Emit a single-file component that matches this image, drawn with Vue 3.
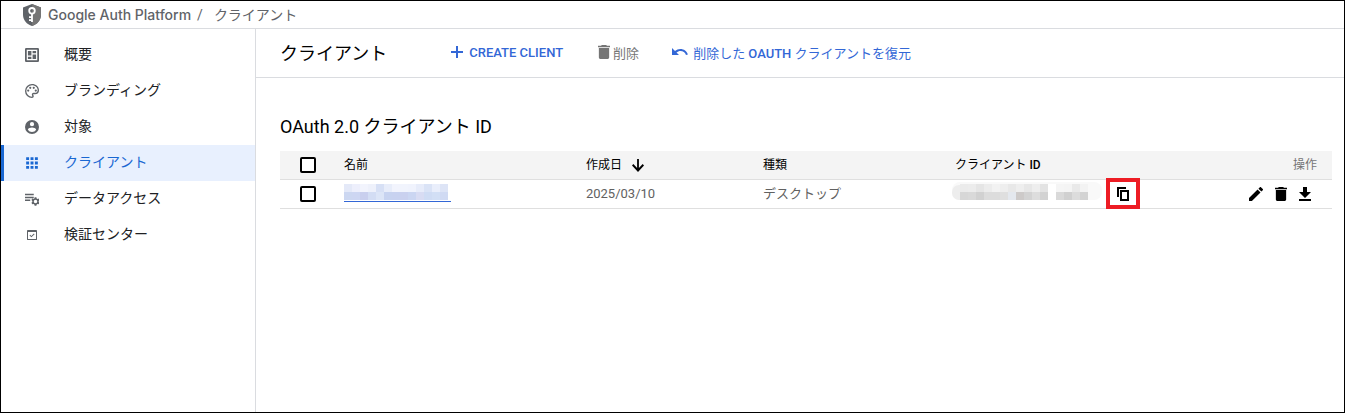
<template>
  <div class="console">
    <header class="topbar">
      <svg class="shield" viewBox="0 0 18 22" aria-hidden="true">
        <path fill="#5f6368" d="M9 0 18 3.4V11c0 5-3.8 9.4-9 11-5.2-1.6-9-6-9-11V3.4z" />
        <path fill="#757575" d="M9 0 18 3.4V11c0 5-3.8 9.4-9 11z" />
        <circle cx="9" cy="6.8" r="2.8" fill="none" stroke="#fff" stroke-width="1.8" />
        <path fill="#fff" d="M8.1 9.5h1.8V18H8.1zM6 12.2h2.5v1.7H6zM6 15.2h2.5v1.7H6z" />
      </svg>
      <a class="product" href="#">Google Auth Platform</a>
      <span class="slash">/</span>
      <span class="crumb">クライアント</span>
    </header>

    <div class="body">
      <nav class="sidebar">
        <a
          v-for="item in menu"
          :key="item.label"
          href="#"
          class="menu-item"
          :class="{ active: item.active }"
        >
          <svg class="menu-icon" :class="{ small: item.small }" viewBox="0 0 24 24" aria-hidden="true">
            <path :d="item.icon" fill-rule="evenodd" />
          </svg>
          <span>{{ item.label }}</span>
        </a>
      </nav>

      <main class="main">
        <div class="toolbar">
          <h1>クライアント</h1>
          <button type="button" class="action create">
            <svg viewBox="0 0 12 12" width="12" height="12" aria-hidden="true"><path d="M5 0h2v5h5v2H7v5H5V7H0V5h5z" /></svg>
            <b>CREATE CLIENT</b>
          </button>
          <button type="button" class="action remove" disabled>
            <svg viewBox="5 3 14 18" width="12" height="14" preserveAspectRatio="none" aria-hidden="true"><path :d="icons.trash" /></svg>
            削除
          </button>
          <button type="button" class="action restore">
            <svg viewBox="0 0 16 10" width="16" height="10" aria-hidden="true">
              <path d="M0 1v7h7L4.5 5.5C5.6 4.6 7 4 8.4 4c2.600 0 4.800 1.600 5.600 4l1.900-.6C14.800 4.200 11.900 2 8.400 2 6.400 2 4.500 2.800 3 4z" />
            </svg>
            <span>削除した <b>OAUTH</b> クライアントを復元</span>
          </button>
        </div>

        <section class="content">
          <h2>OAuth 2.0 クライアント ID</h2>
          <table>
            <colgroup>
              <col class="col-check">
              <col class="col-name">
              <col class="col-date">
              <col class="col-type">
              <col class="col-id">
              <col>
            </colgroup>
            <thead>
              <tr>
                <th class="check"><input type="checkbox" aria-label="すべて選択"></th>
                <th>名前</th>
                <th>
                  <span class="sort">作成日
                    <svg viewBox="4 4 16 16" width="12" height="13" preserveAspectRatio="none" aria-hidden="true"><path d="m20 12-1.800-1.800-5 5V4h-2.400v11.200l-5-5L4 12l8 8z" /></svg>
                  </span>
                </th>
                <th>種類</th>
                <th>クライアント <b>ID</b></th>
                <th class="ops-head">操作</th>
              </tr>
            </thead>
            <tbody>
              <tr>
                <td class="check"><input type="checkbox" aria-label="クライアントを選択"></td>
                <td>
                  <a class="masked-link" href="#" aria-label="クライアント名">
                    <svg width="107" height="17" viewBox="0 0 107 17" aria-hidden="true">
                      <rect v-for="(c, i) in nameMask" :key="i" :x="(i % 13) * 8" :y="i < 13 ? 0 : 8" width="8" height="8" :fill="c" />
                    </svg>
                  </a>
                </td>
                <td>2025/03/10</td>
                <td>デスクトップ</td>
                <td>
                  <div class="id-cell">
                    <svg class="id-mask" width="150" height="18" viewBox="0 0 150 18" aria-hidden="true">
                      <rect width="150" height="18" rx="8" fill="#f9f9f9" />
                      <rect y="3" width="16" height="15" rx="7" fill="#ededed" />
                      <rect v-for="(c, i) in idMask" :key="i" :x="8 + (i % 16) * 8" :y="i < 16 ? 2 : 10" width="8" height="8" :fill="c" />
                    </svg>
                    <button type="button" class="copy" aria-label="コピー">
                      <svg viewBox="0 0 12 14" width="12" height="14" aria-hidden="true">
                        <path d="M0 0h9v2H2v8H0zM3 3h9v11H3zM5 5v7h5V5z" fill-rule="evenodd" />
                      </svg>
                    </button>
                  </div>
                </td>
                <td>
                  <div class="ops">
                    <button type="button" aria-label="編集">
                      <svg viewBox="3 3 18 18" width="14" height="14" aria-hidden="true"><path d="M3 17.250V21h3.750L17.810 9.940l-3.750-3.750zM20.710 7.040a1 1 0 0 0 0-1.410l-2.340-2.340a1 1 0 0 0-1.410 0l-1.830 1.830 3.750 3.750z" /></svg>
                    </button>
                    <button type="button" aria-label="削除">
                      <svg viewBox="5 3 14 18" width="12" height="14" preserveAspectRatio="none" aria-hidden="true"><path :d="icons.trash" /></svg>
                    </button>
                    <button type="button" aria-label="ダウンロード">
                      <svg viewBox="0 0 12 14" width="12" height="14" aria-hidden="true"><path d="M4 0h4v5h4l-6 6-6-6h4zM0 12h12v2H0z" /></svg>
                    </button>
                  </div>
                </td>
              </tr>
            </tbody>
          </table>
        </section>
      </main>
    </div>
  </div>
</template>

<script setup>
const icons = {
  trash: 'M6 19c0 1.100.9 2 2 2h8c1.100 0 2-.9 2-2V7H6zM19 4h-3.500l-1-1h-5l-1 1H5v2h14z'
}

const menu = [
  {
    label: '概要',
    icon: 'M2 0h20a2 2 0 0 1 2 2v20a2 2 0 0 1-2 2H2a2 2 0 0 1-2-2V2a2 2 0 0 1 2-2zM3 3v18h18V3zM5 5h6v8H5zM13 5h6v4h-6zM13 11h6v8h-6zM5 15h6v4H5z'
  },
  {
    label: 'ブランディング',
    icon: 'M12 0a12 12 0 0 0 0 24c1.700 0 3-1.300 3-3 0-.8-.3-1.500-.8-2-.5-.6-.1-1.500.7-1.500H17a7 7 0 0 0 7-7C24 4.700 18.600 0 12 0zM12 2.300c5.300 0 9.700 3.700 9.700 8.200 0 2.600-2.100 4.700-4.700 4.700h-2.100c-2.600 0-4.100 3-2.600 5.100.4.600.2 1.400-.3 1.400a9.700 9.700 0 0 1 0-19.400zM5.500 9.300a1.900 1.900 0 1 0 0 3.800 1.900 1.900 0 0 0 0-3.800zM9 4.700a1.900 1.900 0 1 0 0 3.800 1.900 1.900 0 0 0 0-3.800zM15 4.700a1.900 1.900 0 1 0 0 3.800 1.900 1.900 0 0 0 0-3.800zM18.500 9.300a1.900 1.900 0 1 0 0 3.800 1.900 1.900 0 0 0 0-3.800z'
  },
  {
    label: '対象',
    icon: 'M12 0a12 12 0 1 0 0 24 12 12 0 0 0 0-24zM12 3.600a3.600 3.600 0 1 1 0 7.200 3.600 3.600 0 0 1 0-7.200zM12 20.600a8.600 8.600 0 0 1-7.200-3.900c0-2.400 4.800-3.700 7.200-3.700s7.200 1.300 7.200 3.700a8.600 8.600 0 0 1-7.200 3.900z'
  },
  {
    label: 'クライアント',
    active: true,
    icon: 'M2 2h5v5H2zM9.500 2h5v5h-5zM17 2h5v5h-5zM2 9.500h5v5H2zM9.500 9.500h5v5h-5zM17 9.500h5v5h-5zM2 17h5v5H2zM9.500 17h5v5h-5zM17 17h5v5h-5z'
  },
  {
    label: 'データアクセス',
    icon: 'M0 3h15v2.500H0zM0 8h15v2.500H0zM0 13h9v2.500H0zM16.500 9h3l.5 2 1.500.9 2-.6 1.500 2.600-1.500 1.500v1.700l1.500 1.500-1.500 2.600-2-.6-1.500.9-.5 2h-3l-.5-2-1.500-.9-2 .6-1.500-2.600 1.500-1.500v-1.700L11 13.900l1.500-2.600 2 .6L16 11zM18 13.300a3 3 0 1 0 0 6 3 3 0 0 0 0-6z'
  },
  {
    label: '検証センター',
    small: true,
    icon: 'M2 0h20a2 2 0 0 1 2 2v20a2 2 0 0 1-2 2H2a2 2 0 0 1-2-2V2a2 2 0 0 1 2-2zM2.400 5v16.600h19.200V5zM6 13l1.700-1.700 2.800 2.800 6-6L18.200 10l-7.700 7.500z'
  }
]

// colour blocks that hide the client name and ID
const nameMask = [
  '#e4e9f8', '#edeffc', '#f2f4fd', '#eef1fb', '#d7e0f5', '#e8edfa', '#f2f4fd', '#f1f4fd', '#f0f3fd', '#e7ecfa', '#dae3f6', '#e9eefb', '#dde4f6',
  '#ccd7f1', '#cdd6f2', '#c9cfee', '#d3ddf4', '#dce5f7', '#c7d3f0', '#c8d2f0', '#cad1ef', '#cbd6f2', '#d8dcf3', '#cfdcf4', '#d2dff5', '#d0daf3'
]
const idMask = [
  '#ebebeb', '#ececec', '#e5e5e5', '#ececec', '#f2f2f2', '#eeeeee', '#e8e8e8', '#eeeeee', '#e7e7e7', '#eeeeee', '#e3e3e3', '#ffffff', '#f5f5f5', '#f4f4f4', '#e9e9e9', '#f3f3f3',
  '#d7d7d7', '#d9d9d9', '#d1d1d1', '#dcdcdc', '#dcdcdc', '#dfdfdf', '#e4e8ee', '#cdcac9', '#d3d3d3', '#dddddd', '#d2d2d2', '#ffffff', '#d9d9d9', '#d0d0d0', '#dcdcdc', '#d3d3d3'
]
</script>

<style>
html, body, #app { height: 100%; }
</style>

<style scoped>
.console {
  box-sizing: border-box; min-height: 100%;
  display: flex; flex-direction: column;
  border: 1px solid #000; background: #fff; color: #000;
  font-family: Roboto, "Noto Sans CJK JP", sans-serif; font-size: 13px;
}
.console *, .console *::before { box-sizing: border-box; }
a { color: inherit; text-decoration: none; }
b { font-weight: 500; }
button {
  display: flex; align-items: center; padding: 0; border: 0;
  background: none; color: inherit; font: inherit; cursor: pointer;
}
svg { display: block; flex: none; fill: currentColor; }

.topbar {
  display: flex; align-items: center; height: 28px;
  padding-left: 22px; border-bottom: 1px solid #dadce0;
  color: #5f6368; font-size: 14px;
}
.shield { width: 18px; height: 22px; margin-right: 7px; }
.product { font-family: Inter, sans-serif; font-weight: 500; }
.slash { margin: 0 11px 0 6px; }
.crumb { padding-bottom: 2px; }

.body { flex: 1; display: flex; }
.sidebar {
  flex: none; width: 255px; padding-top: 8px;
  border-right: 1px solid #dadce0;
}
.menu-item {
  display: flex; align-items: center; gap: 24px; height: 36px;
  padding-left: 23px; font-size: 14px; color: #202124;
}
.menu-item span { padding-bottom: 4px; }
.menu-icon { width: 16px; height: 16px; padding: 1px; color: #5f6368; }
.menu-icon.small { padding: 3px; }
.menu-item.active {
  background: #e8f0fe; color: #1967d2;
  border-left: 3px solid #1967d2; padding-left: 20px;
}
.menu-item.active .menu-icon { color: #1967d2; }

.main { flex: 1; min-width: 0; }
.toolbar {
  display: flex; align-items: center; height: 49px;
  padding: 0 0 2px 24px; border-bottom: 1px solid #dadce0;
}
h1, h2 { margin: 0; font-size: 18px; font-weight: 400; }
.action { color: #3367d6; white-space: nowrap; }
.create { margin-left: 64px; gap: 6px; }
.remove { margin-left: 35px; gap: 3px; color: #757575; cursor: default; }
.restore { margin-left: 33px; gap: 5px; }

.content { padding: 36px 12px 0 24px; }
h2 { line-height: 26px; margin-bottom: 11px; }
table { width: 100%; table-layout: fixed; border-collapse: separate; border-spacing: 0; }
.col-check { width: 64px; }
.col-name { width: 23%; }
.col-date { width: 177px; }
.col-type { width: 192px; }
.col-id { width: 20%; }
th, td { height: 29px; padding: 0; text-align: left; border-bottom: 1px solid #dfdfdf; line-height: 20px; }
th { background: #f4f4f4; font-size: 12px; font-weight: 400; }
td { color: #616161; }
.check { padding-left: 20px; }
input[type="checkbox"] {
  appearance: none; display: block; width: 16px; height: 16px; margin: 0;
  border: 2px solid #000; border-radius: 2px; background: #fff;
}
input[type="checkbox"]:checked { background: #3367d6; }
.sort { display: flex; align-items: center; gap: 10px; }
.masked-link { display: block; width: 107px; margin-bottom: 2px; border-bottom: 1px solid #3367d6; }
.id-cell { display: flex; align-items: center; height: 28px; position: relative; }
.id-mask { margin: 0 0 6px -3px; }
.copy {
  position: absolute; left: 151px; top: -2px; width: 34px; height: 31px;
  justify-content: center; border: 4px solid #ed1c24; color: #000;
}
th.ops-head { padding-right: 15px; text-align: right; color: #757575; }
.ops { display: flex; justify-content: flex-end; gap: 12px; padding-right: 21px; color: #000; }
</style>
